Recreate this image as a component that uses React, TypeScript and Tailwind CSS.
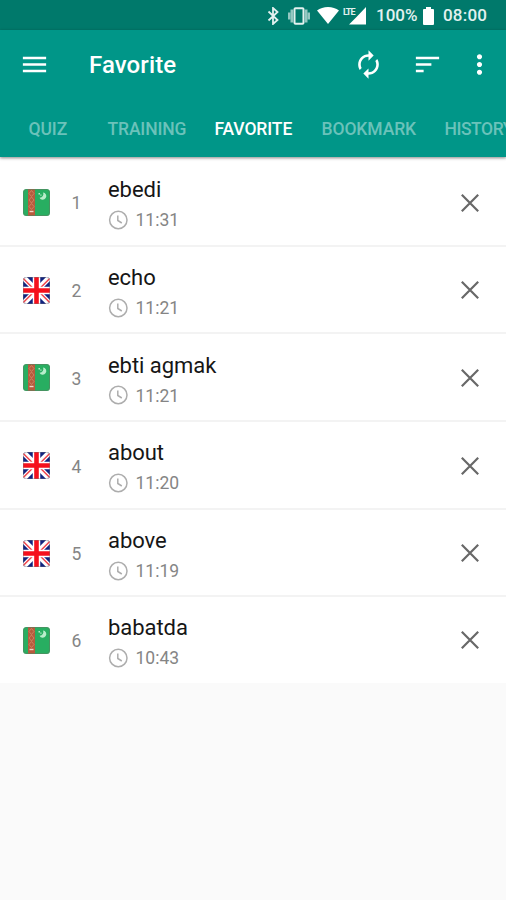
import React, { useState } from 'react';
import { clsx } from 'clsx';

type Lang = 'tk' | 'en';

interface Entry {
  id: number;
  word: string;
  time: string;
  lang: Lang;
}

const TABS = [
  { label: 'QUIZ', width: 'w-[50px] tracking-[-0.1px]' },
  { label: 'TRAINING', width: 'w-[78px] tracking-[-0.15px]' },
  { label: 'FAVORITE', width: 'w-[78px] tracking-[-0.1px]' },
  { label: 'BOOKMARK', width: 'w-[94px] tracking-[-0.1px]' },
  { label: 'HISTORY', width: 'w-[72px] tracking-[-0.45px]' },
];

const ENTRIES: Entry[] = [
  { id: 1, word: 'ebedi', time: '11:31', lang: 'tk' },
  { id: 2, word: 'echo', time: '11:21', lang: 'en' },
  { id: 3, word: 'ebti agmak', time: '11:21', lang: 'tk' },
  { id: 4, word: 'about', time: '11:20', lang: 'en' },
  { id: 5, word: 'above', time: '11:19', lang: 'en' },
  { id: 6, word: 'babatda', time: '10:43', lang: 'tk' },
];

function Icon({ d, className }: { d: string; className?: string }) {
  return (
    <svg viewBox="0 0 24 24" fill="currentColor" className={clsx('shrink-0', className)}>
      <path d={d} />
    </svg>
  );
}

const MENU = 'M3 18h18v-2H3v2zm0-5h18v-2H3v2zm0-7v2h18V6H3z';
const SYNC =
  'M12 6v3l4-4-4-4v3c-4.42 0-8 3.58-8 8 0 1.57.46 3.03 1.24 4.26L6.7 14.8A5.87 5.87 0 0 1 6 12c0-3.31 2.69-6 6-6zm6.76 1.74L17.3 9.2c.44.84.7 1.79.7 2.8 0 3.31-2.69 6-6 6v-3l-4 4 4 4v-3c4.42 0 8-3.58 8-8 0-1.57-.46-3.03-1.24-4.26z';
const SORT = 'M3 18h6v-2H3v2zM3 6v2h18V6H3zm0 7h12v-2H3v2z';
const MORE =
  'M12 8c1.1 0 2-.9 2-2s-.9-2-2-2-2 .9-2 2 .9 2 2 2zm0 2c-1.1 0-2 .9-2 2s.9 2 2 2 2-.9 2-2-.9-2-2-2zm0 6c-1.1 0-2 .9-2 2s.9 2 2 2 2-.9 2-2-.9-2-2-2z';

function StatusBar() {
  return (
    <div className="flex h-[30px] items-center bg-[#00796b] pl-[267px] pt-px text-[17px] font-medium text-[#e3f1ef]">
      <svg viewBox="0 0 12 18" className="h-[18px] w-[12px] shrink-0" fill="none" stroke="currentColor" strokeWidth="1.8">
        <path d="M1.5 4.5l9 8.5-4.5 4V1l4.5 4-9 8.5" />
      </svg>
      <svg viewBox="0 0 22 18" className="ml-[9px] h-[18px] w-[22px] shrink-0" fill="none" stroke="currentColor">
        <rect x="6.5" y="1.2" width="9" height="15.6" rx="1" strokeWidth="2" />
        <path d="M3.8 2.5v13M18.2 2.5v13" strokeWidth="2.6" opacity=".65" />
        <path d="M1.2 5.500v7M20.800 5.500v7" strokeWidth="2.400" opacity=".65" />
      </svg>
      <svg viewBox="0 0 22 17" className="ml-[7px] h-[17px] w-[22px] shrink-0" fill="#fff">
        <path d="M11 17L0 3.6C3 1.2 6.800 0 11 0s8 1.200 11 3.600z" />
      </svg>
      <div className="ml-[4px] flex h-[18px] w-[24px] shrink-0">
        <span className="w-[6px] text-[9px] font-bold leading-[11px] tracking-[-1px]">LTE</span>
        <svg viewBox="0 0 18 18" className="h-[18px] w-[18px] shrink-0" fill="#fff">
          <path d="M17 0v17.500H0L7.500 10z" />
        </svg>
      </div>
      <span className="ml-[9px] w-[43px]">100%</span>
      <svg viewBox="0 0 11 18" className="ml-[4px] h-[18px] w-[11px] shrink-0" fill="#fff">
        <path d="M3 0h5v2h2q1 0 1 1v14q0 1-1 1H1q-1 0-1-1V3q0-1 1-1h2z" />
      </svg>
      <span className="ml-[9px] tracking-[0.2px]">08:00</span>
    </div>
  );
}

function Flag({ lang }: { lang: Lang }) {
  if (lang === 'tk') {
    return (
      <svg viewBox="0 0 27 27" className="h-[27px] w-[27px] shrink-0">
        <rect width="27" height="27" rx="3.500" fill="#28ae61" />
        <path d="M5 0h7v27H5z" fill="#b75b3d" />
        <g fill="none" stroke="#cf8664" strokeWidth="0.9">
          <path d="M8.500 1.500l2.500 3-2.500 3-2.500-3zM8.500 8l2.500 3-2.500 3-2.500-3zM8.500 14.500l2.500 3-2.500 3-2.500-3z" />
          <path d="M6.500 22.500h4" stroke="#f3d5c6" strokeWidth="1.400" />
        </g>
        <path d="M20 3.500a3.600 3.600 0 1 1-3.500 5.200 3.600 3.600 0 0 0 3.500-5.200z" fill="#b9edcb" />
        <path d="M15.500 4h1.500v1.500h-1.500zM17.300 5.500h1.200v1.200h-1.200z" fill="#b9edcb" />
        <rect x=".5" y=".5" width="26" height="26" rx="3" fill="none" stroke="#5c8060" strokeOpacity=".6" />
      </svg>
    );
  }
  return (
    <svg viewBox="0 0 27 27" className="h-[27px] w-[27px] shrink-0">
      <clipPath id="uk-round">
        <rect width="27" height="27" rx="3.500" />
      </clipPath>
      <g clipPath="url(#uk-round)">
        <path d="M0 0h27v27H0z" fill="#12237f" />
        <path d="M0 0l27 27M27 0L0 27" stroke="#fff" strokeWidth="5.500" />
        <path d="M0 1.200l12 12M27 1.200l-12 12M0 25.800l12-12M27 25.800l-12-12" stroke="#f0444c" strokeWidth="1.600" />
        <path d="M13.500 0v27M0 13.500h27" stroke="#fff" strokeWidth="7.500" />
        <path d="M13.500 0v27M0 13.500h27" stroke="#f5101c" strokeWidth="4.600" />
      </g>
      <rect x=".4" y=".4" width="26.200" height="26.200" rx="3.200" fill="none" stroke="#777" strokeOpacity=".5" strokeWidth=".8" />
    </svg>
  );
}

function Row({ entry, last, onRemove }: { entry: Entry; last: boolean; onRemove: () => void }) {
  return (
    <li
      className={clsx(
        'flex items-center bg-white pl-[23px] pr-[20px]',
        last ? 'h-[86px]' : 'h-[87.7px] border-b-2 border-[#f3f3f3] pt-[1.5px]'
      )}
    >
      <Flag lang={entry.lang} />
      <span className="ml-[14px] w-[25px] pt-[2px] text-center text-[17.500px] text-[#858585]">{entry.id}</span>
      <div className="ml-[19px] flex-1 pt-[2.5px]">
        <div className="text-[22px] leading-[30px] tracking-[-0.05px] text-[#161616]">{entry.word}</div>
        <div className="mt-[2px] flex items-center gap-[7px] text-[#858585]">
          <svg viewBox="0 0 20 20" className="h-[20px] w-[20px]" fill="none" stroke="#adadad" strokeWidth="1.500">
            <circle cx="10.300" cy="10" r="8.700" />
            <path d="M9.800 5.500v5l4 2.500" />
          </svg>
          <span className="pl-[0.5px] pt-px text-[17.500px] leading-[24px]">{entry.time}</span>
        </div>
      </div>
      <button onClick={onRemove}>
        <svg viewBox="0 0 32 32" className="h-[32px] w-[32px]" fill="none" stroke="#686868" strokeWidth="2.200">
          <path d="M7.800 7.800l16.400 16.400M24.200 7.800L7.800 24.200" />
        </svg>
      </button>
    </li>
  );
}

export default function App() {
  const [entries, setEntries] = useState(ENTRIES);
  const [tab, setTab] = useState('FAVORITE');

  return (
    <div className="flex h-[900px] w-[506px] flex-col overflow-hidden bg-[#fafafa] font-['Roboto',sans-serif]">
      <StatusBar />
      <header className="z-10 h-[127px] shrink-0 bg-[#009688] text-white shadow-[0_1px_3px_rgba(0,0,0,0.45)]">
        <div className="flex h-[69px] items-center pl-[19px] pr-[11px]">
          <Icon d={MENU} className="h-[31px] w-[31px]" />
          <h1 className="ml-[39px] flex-1 text-[24px] font-medium tracking-[0.1px]">Favorite</h1>
          <Icon d={SYNC} className="h-[31px] w-[31px]" />
          <Icon d={SORT} className="ml-[28px] h-[31px] w-[31px]" />
          <Icon d={MORE} className="ml-[21px] h-[31px] w-[31px]" />
        </div>
        <nav className="flex h-[58px] gap-[29px] overflow-hidden pl-[28.5px]">
          {TABS.map(t => (
            <button
              key={t.label}
              onClick={() => setTab(t.label)}
              className={clsx(
                'h-[58px] shrink-0 whitespace-nowrap pt-[2px] text-left text-[17.500px] font-medium',
                t.width,
                tab === t.label ? 'text-white' : 'text-[#6bc2ba]'
              )}
            >
              {t.label}
            </button>
          ))}
        </nav>
      </header>
      <ul className="pt-[2px]">
        {entries.map((entry, i) => (
          <Row
            key={entry.id}
            entry={entry}
            last={i === entries.length - 1}
            onRemove={() => setEntries(prev => prev.filter(e => e.id !== entry.id))}
          />
        ))}
      </ul>
    </div>
  );
}
